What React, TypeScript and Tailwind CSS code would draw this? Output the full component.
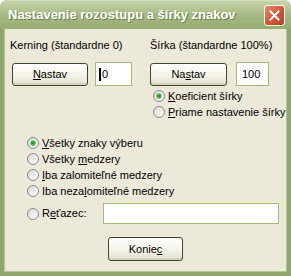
import React from "react";

const font = { fontFamily: '"Liberation Sans", Arial, sans-serif' };

function XpButton({ children, className = "" }: { children: React.ReactNode; className?: string }) {
  return (
    <div
      className={`flex items-center justify-center rounded-[3px] border border-[#3a4a2c] bg-gradient-to-b from-[#ffffff] via-[#f5f4ea] to-[#e3e1d2] text-[11px] text-black shadow-[inset_0_-2px_0_#d6d2c0] ${className}`}
    >
      {children}
    </div>
  );
}

function Radio({ checked = false }: { checked?: boolean }) {
  return (
    <span className="flex h-[12px] w-[12px] shrink-0 items-center justify-center rounded-full border border-[#7b8a9c] bg-gradient-to-br from-[#dcdad0] to-[#ffffff]">
      {checked && (
        <span className="h-[4px] w-[4px] rounded-full bg-[#3c9a2a] shadow-[0_0_0_1px_#8ccf7a]" />
      )}
    </span>
  );
}

function RadioRow({ checked, children, className = "" }: { checked?: boolean; children: React.ReactNode; className?: string }) {
  return (
    <div className={`flex h-[16px] items-center gap-[3px] ${className}`}>
      <Radio checked={checked} />
      <span className="whitespace-nowrap text-[11px] leading-[13px] text-black">{children}</span>
    </div>
  );
}

const U = ({ children }: { children: React.ReactNode }) => <span className="underline underline-offset-[1px]">{children}</span>;

export default function App() {
  return (
    <div style={font} className="flex h-[276px] w-[291px] flex-col overflow-hidden rounded-t-[7px] bg-[#8fa56c]">
      {/* title bar */}
      <div className="flex h-[29px] shrink-0 items-center justify-between rounded-t-[7px] border-t border-[#d5e0bf] bg-gradient-to-b from-[#c6d4a8] via-[#a6ba84] to-[#95ac72] pl-[8px] pr-[6px]">
        <span className="whitespace-nowrap text-[13px] font-bold text-white [text-shadow:1px_1px_0_#6b7f4c]">
          Nastavenie rozostupu a šírky znakov
        </span>
        <div className="flex h-[21px] w-[21px] items-center justify-center rounded-[3px] border border-white bg-gradient-to-br from-[#e8886a] via-[#d3593c] to-[#b8402a]">
          <svg width="11" height="11" viewBox="0 0 11 11">
            <path d="M1.5 1.5 L9.5 9.5 M9.5 1.5 L1.5 9.5" stroke="white" strokeWidth="2" strokeLinecap="square" />
          </svg>
        </div>
      </div>

      {/* body */}
      <div className="mx-[4px] mb-[4px] flex flex-1 flex-col border-x border-b border-[#b4c69a] bg-[#ece9d8]">
        <div className="mt-[10px] flex">
          {/* left column */}
          <div className="flex w-[140px] shrink-0 flex-col pl-[5px]">
            <span className="whitespace-nowrap text-[11px] leading-[13px] text-black">Kerning (štandardne 0)</span>
            <div className="mt-[10px] flex items-center">
              <XpButton className="ml-[2px] h-[23px] w-[76px]">
                <U>N</U>astav
              </XpButton>
              <div className="ml-[7px] flex h-[24px] w-[37px] items-center border border-[#a5b97b] bg-white pl-[3px] text-[11px]">
                <span className="mr-[1px] h-[13px] w-[2px] bg-black" />0
              </div>
            </div>
          </div>
          {/* right column */}
          <div className="flex flex-1 flex-col pl-[5px]">
            <span className="whitespace-nowrap text-[11px] leading-[13px] text-black">Šírka (štandardne 100%)</span>
            <div className="mt-[10px] flex items-center">
              <XpButton className="h-[23px] w-[77px]">
                Na<U>s</U>tav
              </XpButton>
              <div className="ml-[9px] flex h-[24px] w-[33px] items-center border border-[#a5b97b] bg-white pl-[5px] text-[11px]">
                100
              </div>
            </div>
            <RadioRow checked className="ml-[3px] mt-[2px]">
              <U>K</U>oeficient šírky
            </RadioRow>
            <RadioRow className="ml-[3px]">
              <U>P</U>riame nastavenie šírky
            </RadioRow>
          </div>
        </div>

        <div className="ml-[22px] mt-[15px] flex flex-col">
          <RadioRow checked>
            <U>V</U>šetky znaky výberu
          </RadioRow>
          <RadioRow>
            Všetky <U>m</U>edzery
          </RadioRow>
          <RadioRow>
            <U>I</U>ba zalomiteľné medzery
          </RadioRow>
          <RadioRow>
            Iba neza<U>l</U>omiteľné medzery
          </RadioRow>
          <div className="mt-[4px] flex items-center">
            <RadioRow>
              R<U>e</U>ťazec:
            </RadioRow>
            <div className="ml-[16px] h-[21px] w-[176px] border border-[#a5b97b] bg-white" />
          </div>
        </div>

        <div className="mt-[13px] flex justify-center">
          <XpButton className="h-[24px] w-[75px]">
            Konie<U>c</U>
          </XpButton>
        </div>
      </div>
    </div>
  );
}
